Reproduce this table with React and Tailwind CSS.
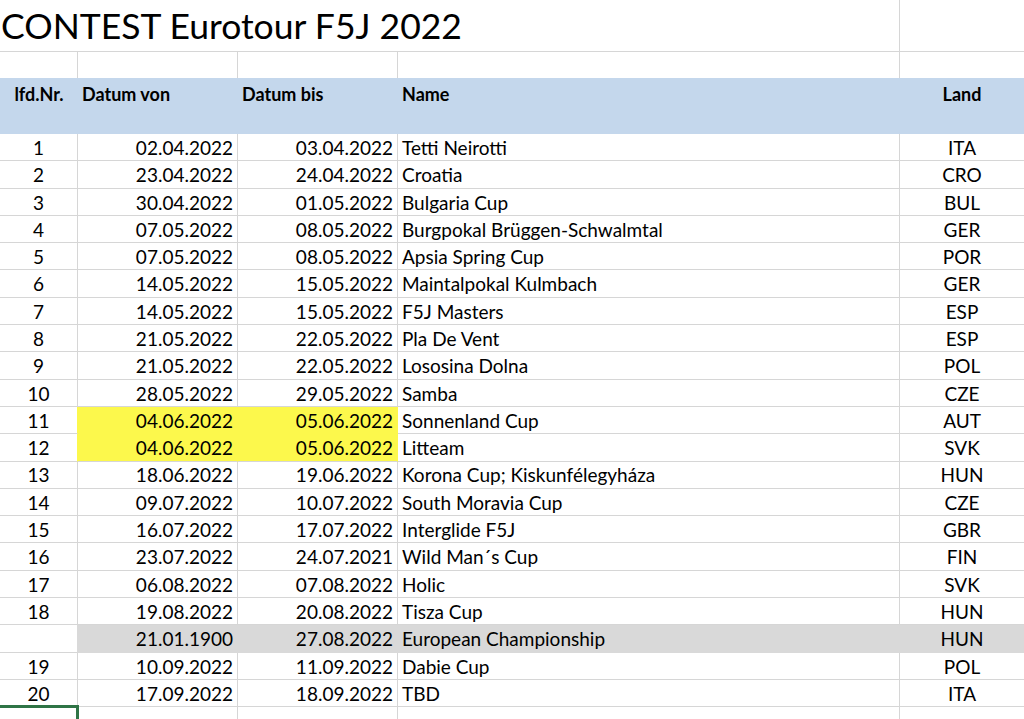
import React from 'react';

const rows = [
  ['1', '02.04.2022', '03.04.2022', 'Tetti Neirotti', 'ITA'],
  ['2', '23.04.2022', '24.04.2022', 'Croatia', 'CRO'],
  ['3', '30.04.2022', '01.05.2022', 'Bulgaria Cup', 'BUL'],
  ['4', '07.05.2022', '08.05.2022', 'Burgpokal Brüggen-Schwalmtal', 'GER'],
  ['5', '07.05.2022', '08.05.2022', 'Apsia Spring Cup', 'POR'],
  ['6', '14.05.2022', '15.05.2022', 'Maintalpokal Kulmbach', 'GER'],
  ['7', '14.05.2022', '15.05.2022', 'F5J Masters', 'ESP'],
  ['8', '21.05.2022', '22.05.2022', 'Pla De Vent', 'ESP'],
  ['9', '21.05.2022', '22.05.2022', 'Lososina Dolna', 'POL'],
  ['10', '28.05.2022', '29.05.2022', 'Samba', 'CZE'],
  ['11', '04.06.2022', '05.06.2022', 'Sonnenland Cup', 'AUT', 'yellow'],
  ['12', '04.06.2022', '05.06.2022', 'Litteam', 'SVK', 'yellow-last'],
  ['13', '18.06.2022', '19.06.2022', 'Korona Cup; Kiskunfélegyháza', 'HUN'],
  ['14', '09.07.2022', '10.07.2022', 'South Moravia Cup', 'CZE'],
  ['15', '16.07.2022', '17.07.2022', 'Interglide F5J', 'GBR'],
  ['16', '23.07.2022', '24.07.2021', 'Wild Man´s Cup', 'FIN'],
  ['17', '06.08.2022', '07.08.2022', 'Holic', 'SVK'],
  ['18', '19.08.2022', '20.08.2022', 'Tisza Cup', 'HUN'],
  ['', '21.01.1900', '27.08.2022', 'European Championship', 'HUN', 'gray'],
  ['19', '10.09.2022', '11.09.2022', 'Dabie Cup', 'POL'],
  ['20', '17.09.2022', '18.09.2022', 'TBD', 'ITA'],
];

function DataRow({ r }) {
  const [nr, von, bis, name, land, fill] = r;
  const yellow = fill === 'yellow' || fill === 'yellow-last';
  const gray = fill === 'gray';

  // filled cells hide the grid lines, like in Excel
  const c1 = yellow ? 'border-r-[#fcf84c]' : gray ? 'border-r-[#d9d9d9]' : 'border-r-[#d6d6d6]';
  const dateBg = yellow ? 'bg-[#fcf84c]' : gray ? 'bg-[#d9d9d9]' : '';
  const dateR = yellow ? 'border-r-[#fcf84c]' : gray ? 'border-r-[#d9d9d9]' : 'border-r-[#d6d6d6]';
  const dateB = fill === 'yellow' ? 'border-b-[#fcf84c]' : gray ? 'border-b-[#d9d9d9]' : 'border-b-[#d6d6d6]';
  const restBg = gray ? 'bg-[#d9d9d9]' : '';
  const restR = gray ? 'border-r-[#d9d9d9]' : 'border-r-[#d6d6d6]';
  const restB = gray ? 'border-b-[#d9d9d9]' : 'border-b-[#d6d6d6]';

  return (
    <div className="flex h-[27.3px]">
      <div className={`w-[78px] shrink-0 flex items-center justify-center pt-[2px] border-r border-b border-b-[#d6d6d6] ${c1}`}>{nr}</div>
      <div className={`w-[160px] shrink-0 flex items-center justify-end pr-[4px] pt-[2px] border-r border-b ${dateBg} ${dateR} ${dateB}`}>{von}</div>
      <div className={`w-[160px] shrink-0 flex items-center justify-end pr-[4px] pt-[2px] border-r border-b ${dateBg} ${dateR} ${dateB}`}>{bis}</div>
      <div className={`w-[502px] shrink-0 flex items-center pl-[4px] pt-[2px] border-r border-b ${restBg} ${restR} ${restB}`}>{name}</div>
      <div className={`flex-1 flex items-center justify-center pt-[2px] border-b ${restBg} ${restB}`}>{land}</div>
    </div>
  );
}

export default function App() {
  return (
    <div className="w-[1024px] h-[719px] overflow-hidden bg-white text-black text-[19px] font-['Lato',sans-serif]">
      {/* title row */}
      <div className="flex h-[52px] border-b border-[#d6d6d6]">
        <div className="w-[900px] shrink-0 flex items-center pl-[1px] pt-[1px] border-r border-[#d6d6d6] text-[35.5px] leading-none whitespace-nowrap">
          CONTEST Eurotour F5J 2022
        </div>
        <div className="flex-1" />
      </div>

      {/* empty row */}
      <div className="flex h-[26px]">
        <div className="w-[78px] shrink-0 border-r border-[#d6d6d6]" />
        <div className="w-[160px] shrink-0 border-r border-[#d6d6d6]" />
        <div className="w-[160px] shrink-0 border-r border-[#d6d6d6]" />
        <div className="w-[502px] shrink-0 border-r border-[#d6d6d6]" />
        <div className="flex-1" />
      </div>

      {/* header */}
      <div className="flex h-[56px] bg-[#c4d7ec] font-bold text-[18px] leading-[20px] pt-[6px]">
        <div className="w-[78px] shrink-0 text-center">lfd.Nr.</div>
        <div className="w-[160px] shrink-0 pl-[4px]">Datum von</div>
        <div className="w-[160px] shrink-0 pl-[4px]">Datum bis</div>
        <div className="w-[502px] shrink-0 pl-[4px]">Name</div>
        <div className="flex-1 text-center">Land</div>
      </div>

      {rows.map((r, i) => (
        <DataRow key={i} r={r} />
      ))}

      {/* last row with the selected cell */}
      <div className="flex h-[27px]">
        <div className="relative w-[78px] shrink-0 border-r border-[#d6d6d6]">
          <div className="absolute -top-[2px] -left-[3px] -right-[2px] h-[30px] border-t-[3px] border-r-[3px] border-l-[3px] border-[#2f7446]" />
        </div>
        <div className="w-[160px] shrink-0 border-r border-[#d6d6d6]" />
        <div className="w-[160px] shrink-0 border-r border-[#d6d6d6]" />
        <div className="w-[502px] shrink-0 border-r border-[#d6d6d6]" />
        <div className="flex-1" />
      </div>
    </div>
  );
}
